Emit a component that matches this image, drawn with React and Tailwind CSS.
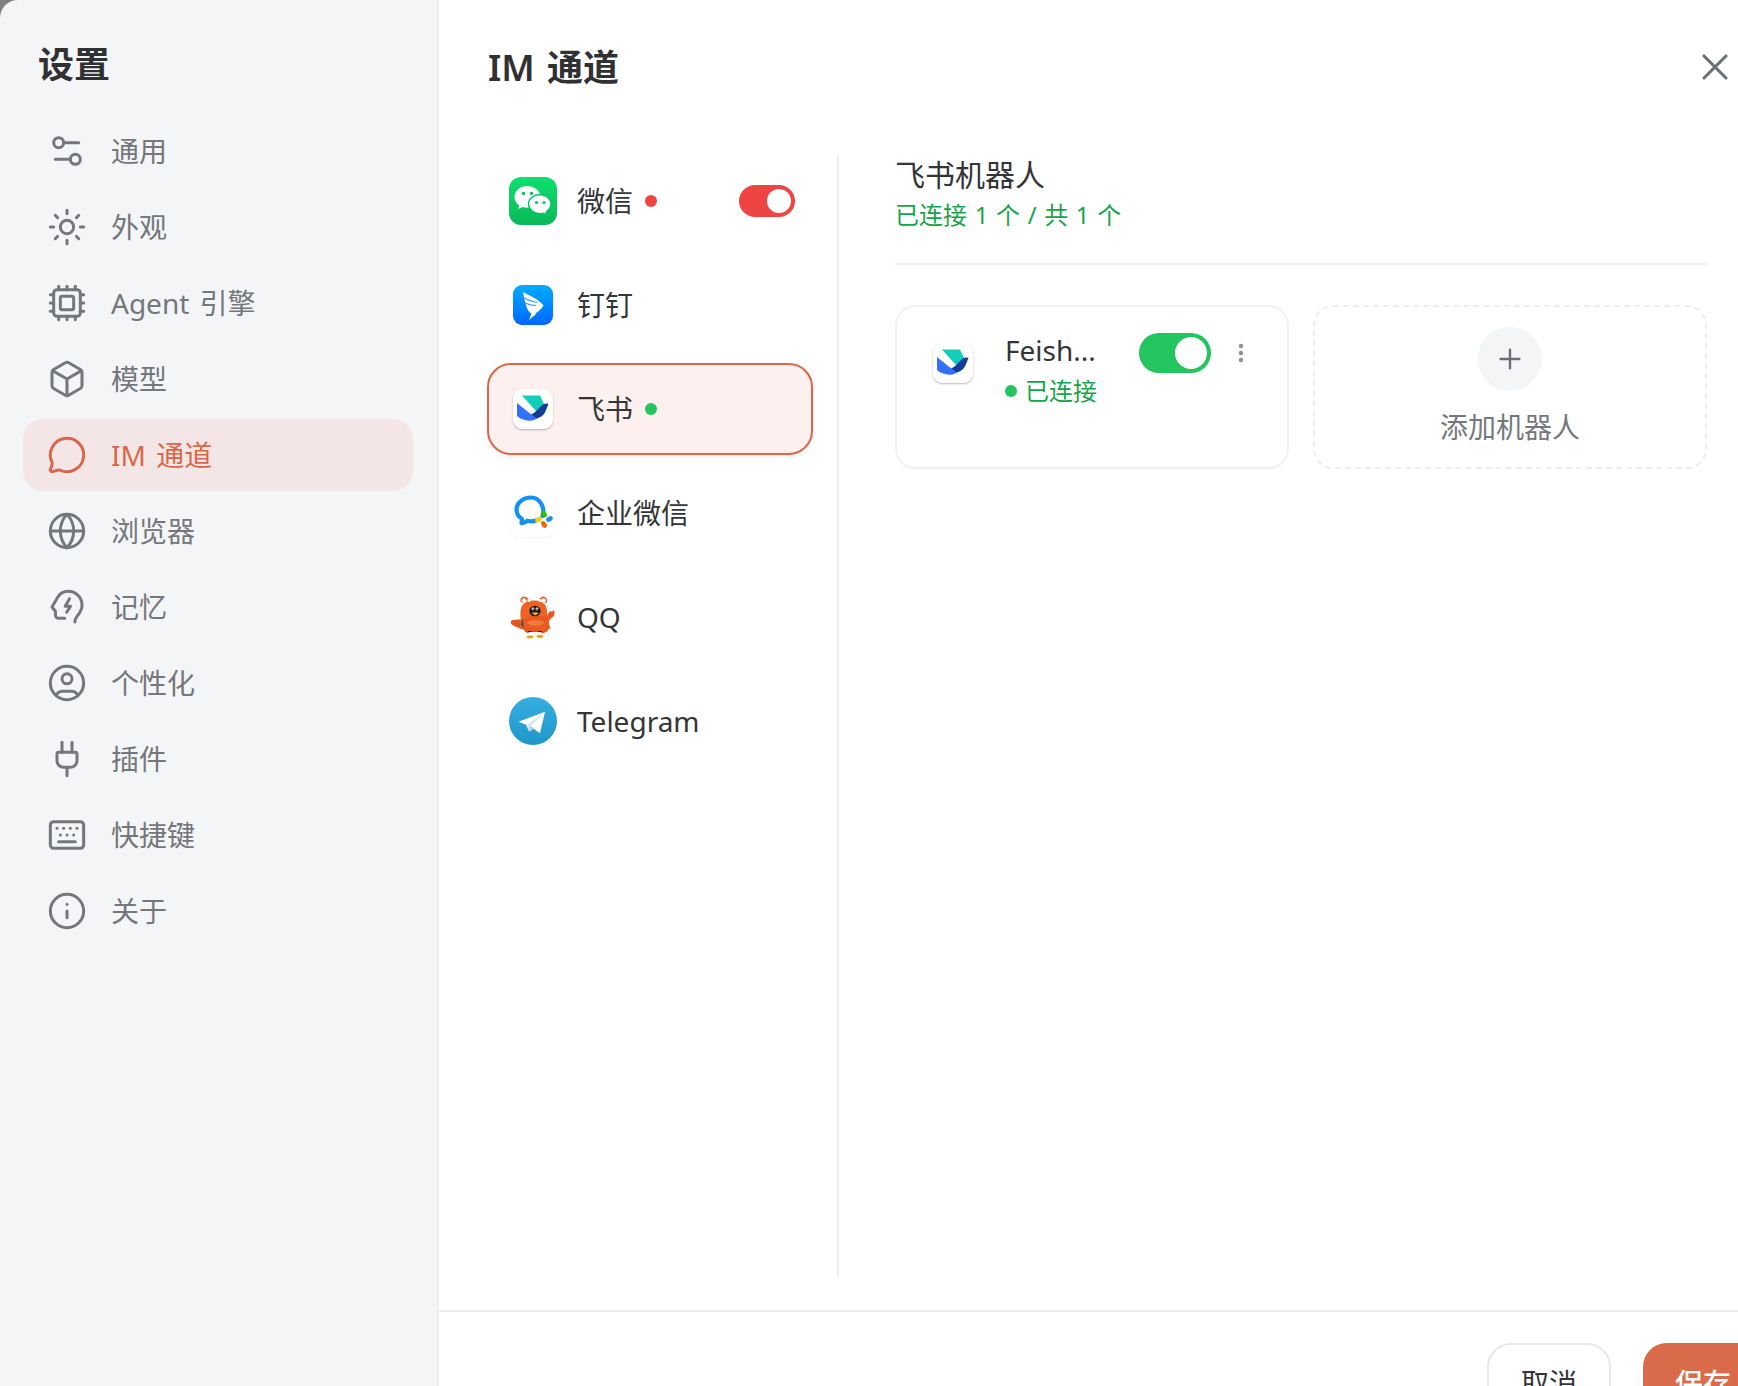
import { Settings2, Sun, Cpu, Box, MessageCircle, Globe, Plug, Keyboard, Info, X, EllipsisVertical, Plus } from 'lucide-react'

function MemoryIcon({ className }) {
  return (
    <svg viewBox="-1.33 -1.33 26.67 26.67" fill="none" stroke="currentColor" strokeWidth="2" strokeLinecap="round" strokeLinejoin="round" className={className}>
      <path d="M17.3 22c-.3-1.5.6-2.8 2-4.6 2-2.5 3-4.5 2.7-7.4C21.6 5 17.5 1.5 13 1.5c-3 0-5.5 1.2-7 3.7L2 12l2.3 2.8v2.7c0 1.2 1 2 2 2h4.2" />
      <path d="M13.7 6.5 10.8 11.5h3.6l-2.6 4" />
    </svg>
  )
}

function PersonIcon({ className }) {
  return (
    <svg viewBox="0 0 24 24" fill="none" stroke="currentColor" strokeWidth="1.8" strokeLinecap="round" strokeLinejoin="round" className={className}>
      <circle cx="12" cy="12" r="10" />
      <circle cx="12" cy="9.5" r="3" />
      <path d="M5.500 19.500a4 4 0 0 1 3.500-2.500h6a4 4 0 0 1 3.500 2.500" />
    </svg>
  )
}

function WechatLogo() {
  return (
    <svg viewBox="0 0 48 48" className="h-12 w-12">
      <defs>
        <linearGradient id="wx" x1="0" y1="0" x2="0" y2="1">
          <stop offset="0" stopColor="#0de070" />
          <stop offset="1" stopColor="#0ab857" />
        </linearGradient>
      </defs>
      <rect width="48" height="48" rx="12" fill="url(#wx)" />
      <path d="M18.500 9C11.300 9 5.500 13.900 5.500 20c0 3.400 1.800 6.400 4.700 8.400L9.300 32l4-2.100c1.600.5 3.400.8 5.200.8 7.200 0 13-4.800 13-10.700S25.700 9 18.500 9z" fill="#fff" />
      <path d="M31 17.500c-6.300 0-11.500 4.300-11.500 9.600s5.200 9.600 11.500 9.600c1.300 0 2.600-.2 3.800-.6l3.500 1.900-.9-3.300c2.800-1.800 4.600-4.500 4.600-7.600 0-5.300-5.200-9.600-11-9.600z" fill="#fff" stroke="#0bc060" strokeWidth="1.400" />
      <circle cx="14.500" cy="16.500" r="1.800" fill="#0bc763" />
      <circle cx="22.500" cy="16.500" r="1.800" fill="#0bc763" />
      <circle cx="27.500" cy="25.500" r="1.600" fill="#0bc763" />
      <circle cx="35" cy="25.500" r="1.600" fill="#0bc763" />
    </svg>
  )
}

function DingtalkLogo() {
  return (
    <div className="flex h-12 w-12 items-center justify-center">
      <svg viewBox="0 0 40 40" className="h-10 w-10">
        <defs>
          <linearGradient id="dd" x1="0" y1="0" x2="0" y2="1">
            <stop offset="0" stopColor="#00adff" />
            <stop offset="1" stopColor="#0066ff" />
          </linearGradient>
        </defs>
        <rect width="40" height="40" rx="9" fill="url(#dd)" />
        <path d="M10 7c6 3.500 16 7 20.500 13.500-2 3.500-5 6-8.500 8l1.500.3L16 35l2.500-6.500c-2.500-1-4.500-4-5.500-8.500-1.200-4.500-2.500-9-3-13z" fill="#fff" />
        <path d="M10.500 12.500c4 2.500 9 4 14 5M12 18c3 1.500 7 2.500 11 2.500" stroke="#3d98ff" strokeWidth="1.200" fill="none" />
      </svg>
    </div>
  )
}

function FeishuLogo() {
  return (
    <div className="flex h-10 w-10 items-center justify-center rounded-[9px] bg-white shadow-[0_1px_2px_rgba(0,0,0,0.28)]">
      <svg viewBox="0 0 40 40" className="h-10 w-10">
        <path d="M9 6.500h18l4.500 9.500-8.500 6z" fill="#12cdb8" />
        <path d="M4 14l13 10.500c2 1.500 4 1.500 5.500.5l3.500 3.500c-4 3-9 4-14 2.500-3.500-1-6-2-8-4z" fill="#3370ff" />
        <path d="M35.500 15c-2.500-1-5.500 0-8 2.500L22 23c-1.500 1.500-3 2-4 2l5 4c4 0 7-2 9-5.500z" fill="#133c9a" />
      </svg>
    </div>
  )
}

function WecomLogo() {
  return (
    <div className="flex h-12 w-12 items-center justify-center rounded-xl bg-white shadow-[0_1px_2px_rgba(0,0,0,0.06)]">
      <svg viewBox="0 0 48 48" className="h-12 w-12">
        <path d="M33.500 27C36.500 18 30.500 8.500 22 8.500 14 8.500 7.500 14 7.500 20.500c0 4 2.300 7.400 5.500 9.500l-.5 4c2 .5 4.500-1 6-2.300 2.500.8 6 .8 8.500-.2" fill="none" stroke="#1590f5" strokeWidth="4.200" strokeLinecap="round" strokeLinejoin="round" />
        <ellipse cx="29.500" cy="30.500" rx="3.600" ry="2.400" transform="rotate(-35 29.500 30.500)" fill="#ffce00" />
        <ellipse cx="35" cy="25" rx="3.600" ry="2.400" transform="rotate(55 35 25)" fill="#2dc100" />
        <ellipse cx="40.500" cy="30" rx="3.600" ry="2.400" transform="rotate(-35 40.500 30)" fill="#1590f5" />
        <ellipse cx="35" cy="35.500" rx="3.600" ry="2.400" transform="rotate(55 35 35.500)" fill="#fa6400" />
      </svg>
    </div>
  )
}

function LobsterLogo() {
  return (
    <svg viewBox="0 0 48 48" className="h-12 w-12">
      <g fill="none" stroke="#ea5a20" strokeWidth="1.200" strokeLinecap="round">
        <path d="M19 9c-2-4-4-6-6-4-2 1.500-1 4 .5 4" />
        <path d="M20 8c-1-3-4-5-7-2" />
        <path d="M31 9c1-4 3-6 5-4 2 1 2 4 .5 4.500" />
        <path d="M30 8c1-3 3-4 6-3" />
      </g>
      <path d="M4 27c-3 .5-2.500 3.500-1 4.500 2 2 7 3 10 5l4-4-3-6c-3 0-6-.5-10 .5z" fill="#e8541c" />
      <path d="M11 29c-1 4 1 7 6 8l4-6-4-4z" fill="#ef6424" />
      <path d="M12 28c-1-6-1-12 1.500-16 2-3 6.500-4.500 11.500-4.500 6 0 11 2 12.500 7.500 1 4 1 9 0 13z" fill="#ef6424" />
      <rect x="14" y="23" width="26" height="17" rx="6" fill="#ea5a20" />
      <path d="M14 25l-2.500 6 3.500 5z" fill="#555" />
      <ellipse cx="26" cy="18" rx="5.600" ry="5.200" fill="#151515" />
      <circle cx="24" cy="16" r="1.400" fill="#fff" />
      <circle cx="28" cy="16" r="1.400" fill="#fff" />
      <circle cx="24.300" cy="16.200" r="0.700" fill="#111" />
      <circle cx="28" cy="16.200" r="0.700" fill="#111" />
      <path d="M22.500 20c2-1 5-1 7.500 0l-3.700 2.500z" fill="#f3b415" />
      <circle cx="20" cy="7.500" r="1.500" fill="#fff" />
      <circle cx="31" cy="7.500" r="1.500" fill="#fff" />
      <path d="M18 29c4-2.500 13-2.500 17 0-1 5-15 5-17 0z" fill="#f27a3a" />
      <path d="M18 40c3-2 13-2 16 0-2 3-14 3-16 0z" fill="#f3f3f3" />
      <path d="M18 40c3-2 13-2 16 0l-1-2H19z" fill="#222" />
      <ellipse cx="21" cy="44" rx="3.500" ry="1.400" fill="#e6a511" />
      <ellipse cx="31" cy="43.500" rx="3.500" ry="1.400" fill="#e6a511" />
      <path d="M37 27l2.500 1 3.500-3.500c2.500-1 3-4.500 2-7.500l-2.500 2-.5-1.500-2 1.800c-1.500 2-2 3.500-2 4.500l-2 2z" fill="#ea5a20" />
      <path d="M38 31l3 1-.5 2 1.500 1-2 1-3-2z" fill="#ea5a20" />
    </svg>
  )
}

function TelegramLogo() {
  return (
    <svg viewBox="0 0 48 48" className="h-12 w-12">
      <defs>
        <linearGradient id="tg" x1="0" y1="0" x2="0" y2="1">
          <stop offset="0" stopColor="#37aee2" />
          <stop offset="1" stopColor="#1e96c8" />
        </linearGradient>
      </defs>
      <circle cx="24" cy="24" r="24" fill="url(#tg)" />
      <path d="M9.500 24.700 36 14.700 31 36.300 21.500 29.500z" fill="#fff" />
      <path d="M17 28.500 20.500 35 21.500 29.500 36 14.700z" fill="#d2e5f1" />
      <path d="M20.500 35 25 31.500 21.500 29.500z" fill="#b5cfe4" />
    </svg>
  )
}

const navItems = [
  { label: '通用', icon: Settings2 },
  { label: '外观', icon: Sun },
  { label: 'Agent 引擎', icon: Cpu },
  { label: '模型', icon: Box },
  { label: 'IM 通道', icon: MessageCircle, active: true },
  { label: '浏览器', icon: Globe },
  { label: '记忆', icon: MemoryIcon },
  { label: '个性化', icon: PersonIcon },
  { label: '插件', icon: Plug },
  { label: '快捷键', icon: Keyboard },
  { label: '关于', icon: Info },
]

const channels = [
  { label: '微信', logo: <WechatLogo />, dot: 'bg-[#ef4444]', toggle: true },
  { label: '钉钉', logo: <DingtalkLogo /> },
  { label: '飞书', logo: <div className="flex h-12 w-12 items-center justify-center"><FeishuLogo /></div>, dot: 'bg-[#22c55e]', active: true },
  { label: '企业微信', logo: <WecomLogo /> },
  { label: 'QQ', logo: <LobsterLogo /> },
  { label: 'Telegram', logo: <TelegramLogo /> },
]

function Sidebar() {
  return (
    <aside className="w-[439px] shrink-0 rounded-tl-[18px] border-r-2 border-[#eceef0] bg-[#f4f5f7] pr-[24px] pl-[23px] pt-[43px]">
      <h1 className="mb-[28px] pl-[15px] text-[36px] leading-[44px] font-bold text-[#2f3133]">设置</h1>
      <nav className="flex flex-col gap-[4px]">
        {navItems.map(item => {
          const Icon = item.icon
          return (
            <div
              key={item.label}
              className={`flex h-[72px] items-center gap-[24px] rounded-[20px] pl-[24px] text-[28px] [word-spacing:3px] ${item.active ? 'bg-[#f4e6e6] text-[#d9684a]' : 'text-[#74777c]'}`}
            >
              <Icon className="h-[40px] w-[40px] shrink-0" strokeWidth={1.8} />
              <span>{item.label}</span>
            </div>
          )
        })}
      </nav>
    </aside>
  )
}

function ChannelList() {
  return (
    <div className="flex w-[326px] shrink-0 flex-col gap-[12px]">
      {channels.map(ch => (
        <div
          key={ch.label}
          className={`flex h-[92px] items-center rounded-[24px] border-2 pl-[20px] pr-[16px] ${ch.active ? 'border-[#d9684a] bg-[#fdf0ef] shadow-[0_2px_6px_rgba(0,0,0,0.06)]' : 'border-transparent'}`}
        >
          {ch.logo}
          <span className="ml-[20px] text-[28px] text-[#333538]">{ch.label}</span>
          {ch.dot && <span className={`ml-[12px] h-[12px] w-[12px] rounded-full ${ch.dot}`} />}
          {ch.toggle && (
            <span className="ml-auto flex h-[32px] w-[56px] items-center justify-end rounded-full bg-[#ef4444] pr-[4px]">
              <span className="h-[24px] w-[24px] rounded-full bg-white" />
            </span>
          )}
        </div>
      ))}
    </div>
  )
}

function BotPanel() {
  return (
    <div className="w-[812px] shrink-0">
      <h2 className="text-[30px] leading-[40px] text-[#333538]">飞书机器人</h2>
      <p className="mt-[2px] text-[24px] leading-[36px] text-[#16a34a] [word-spacing:1.4px]">已连接 1 个 / 共 1 个</p>
      <div className="mt-[30px] h-[2px] bg-[#f1f2f4]" />
      <div className="mt-[40px] grid grid-cols-2 gap-[24px]">
        <div className="flex h-[164px] items-start rounded-[20px] border-2 border-[#f1f2f4] pl-[36px] pt-[25px]">
          <div className="mt-[11px]"><FeishuLogo /></div>
          <div className="ml-[32px] w-[134px] shrink-0">
            <div className="text-[28px] leading-[36px] text-[#333538]">Feish...</div>
            <div className="mt-[5px] flex items-center gap-[8px] text-[24px] leading-[36px] text-[#16a34a]">
              <span className="h-[12px] w-[12px] rounded-full bg-[#22c55e]" />
              已连接
            </div>
          </div>
          <span className="mt-[1px] flex h-[40px] w-[72px] shrink-0 items-center justify-end rounded-full bg-[#22c55e] pr-[4px]">
            <span className="h-[32px] w-[32px] rounded-full bg-white" />
          </span>
          <EllipsisVertical className="ml-[18px] mt-[9px] h-[24px] w-[24px] shrink-0 text-[#8b8f94]" strokeWidth={2.4} />
        </div>
        <div className="flex h-[164px] flex-col items-center justify-center gap-[18px] rounded-[20px] border-2 border-dashed border-[#eceef0] pb-[3px]">
          <span className="flex h-[64px] w-[64px] items-center justify-center rounded-full bg-[#f4f5f7]">
            <Plus className="h-[32px] w-[32px] text-[#6b7075]" strokeWidth={1.8} />
          </span>
          <span className="text-[28px] leading-[36px] text-[#74777c]">添加机器人</span>
        </div>
      </div>
    </div>
  )
}

export default function App() {
  return (
    <div className="flex h-[1386px] w-[1738px] overflow-hidden bg-[#808080] font-['Noto_Sans','Noto_Sans_CJK_SC',sans-serif]">
      <Sidebar />
      <main className="flex w-[1340px] shrink-0 flex-col bg-white">
        <header className="flex h-[155px] shrink-0 items-start justify-between pl-[49px] pr-[42px] pt-[44px]">
          <h1 className="text-[36px] leading-[48px] font-semibold text-[#2f3133] [word-spacing:3px]">IM 通道</h1>
          <X className="mt-[1px] h-[44px] w-[44px] text-[#6b7075]" strokeWidth={1.7} />
        </header>
        <div className="flex h-[1122px] shrink-0 pl-[48px]">
          <ChannelList />
          <div className="ml-[24px] mr-[56px] w-[2px] bg-[#eceef0]" />
          <BotPanel />
        </div>
        <footer className="mt-[33px] flex shrink-0 gap-[32px] border-t-2 border-[#eaeaea] pl-[1048px] pt-[31px]">
          <button className="h-[80px] w-[124px] shrink-0 rounded-[24px] border-2 border-[#e8e8e8] text-[28px] text-[#333538]">取消</button>
          <button className="h-[80px] w-[120px] shrink-0 rounded-[24px] bg-[#d96b4a] text-[28px] font-medium text-white">保存</button>
        </footer>
      </main>
    </div>
  )
}
